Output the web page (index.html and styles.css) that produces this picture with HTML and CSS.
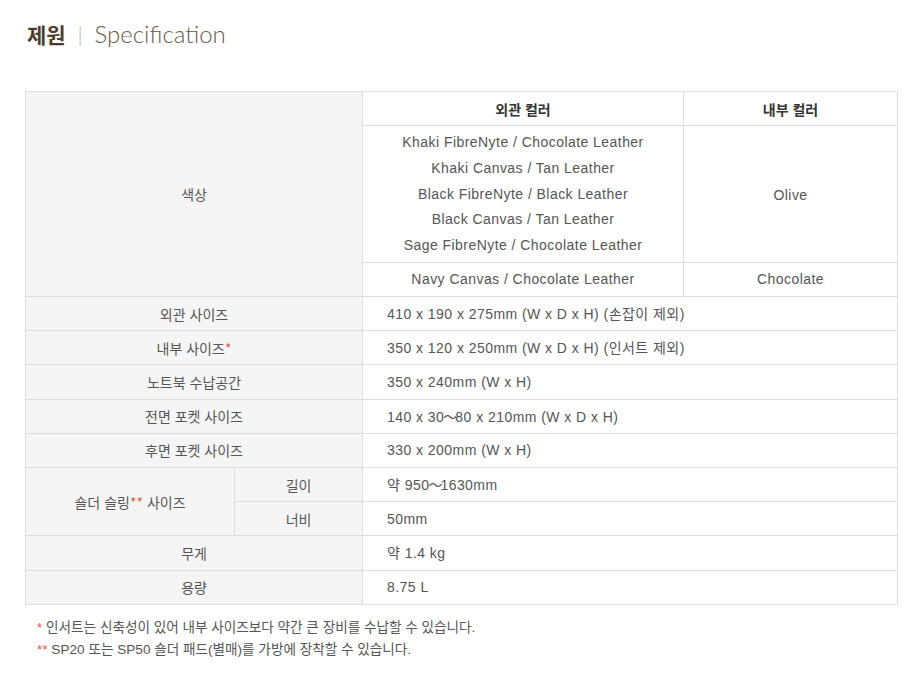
FILE: index.html
```html
<!DOCTYPE html>
<html lang="ko">
<head>
<meta charset="utf-8">
<link rel="stylesheet" href="styles.css">
</head>
<body>
<div class="page">
  <h1 class="title"><span class="ko">제원</span><span class="sep">|</span><span class="en">Specification</span></h1>
  <table class="spec">
    <colgroup>
      <col class="c1"><col class="c2"><col class="c3"><col class="c4">
    </colgroup>
    <tr class="r">
      <th class="lab" colspan="2" rowspan="3">색상</th>
      <th class="head">외관 컬러</th>
      <th class="head">내부 컬러</th>
    </tr>
    <tr>
      <td class="multi">Khaki FibreNyte / Chocolate Leather<br>Khaki Canvas / Tan Leather<br>Black FibreNyte / Black Leather<br>Black Canvas / Tan Leather<br>Sage FibreNyte / Chocolate Leather</td>
      <td class="center olive">Olive</td>
    </tr>
    <tr class="r">
      <td class="center">Navy Canvas / Chocolate Leather</td>
      <td class="center">Chocolate</td>
    </tr>
    <tr class="r">
      <th class="lab" colspan="2">외관 사이즈</th>
      <td class="val" colspan="2">410 x 190 x 275mm (W x D x H) (손잡이 제외)</td>
    </tr>
    <tr class="r">
      <th class="lab" colspan="2">내부 사이즈<span class="ast">*</span></th>
      <td class="val" colspan="2">350 x 120 x 250mm (W x D x H) (인서트 제외)</td>
    </tr>
    <tr class="r">
      <th class="lab" colspan="2">노트북 수납공간</th>
      <td class="val" colspan="2">350 x 240mm (W x H)</td>
    </tr>
    <tr class="r">
      <th class="lab" colspan="2">전면 포켓 사이즈</th>
      <td class="val" colspan="2">140 x 30<span class="tilde">～</span>80 x 210mm (W x D x H)</td>
    </tr>
    <tr class="r">
      <th class="lab" colspan="2">후면 포켓 사이즈</th>
      <td class="val" colspan="2">330 x 200mm (W x H)</td>
    </tr>
    <tr class="r">
      <th class="lab" rowspan="2">숄더 슬링<span class="ast">**</span> 사이즈</th>
      <th class="lab">길이</th>
      <td class="val" colspan="2">약 950<span class="tilde">～</span>1630mm</td>
    </tr>
    <tr class="r">
      <th class="lab">너비</th>
      <td class="val" colspan="2">50mm</td>
    </tr>
    <tr class="r">
      <th class="lab" colspan="2">무게</th>
      <td class="val" colspan="2">약 1.4 kg</td>
    </tr>
    <tr class="r">
      <th class="lab" colspan="2">용량</th>
      <td class="val" colspan="2">8.75 L</td>
    </tr>
  </table>
  <ul class="notes">
    <li><span class="ast">*</span> 인서트는 신축성이 있어 내부 사이즈보다 약간 큰 장비를 수납할 수 있습니다.</li>
    <li><span class="ast">**</span> SP20 또는 SP50 숄더 패드(별매)를 가방에 장착할 수 있습니다.</li>
  </ul>
</div>
</body>
</html>
```

FILE: styles.css
```css
html, body {
  margin: 0;
  padding: 0;
  background: #ffffff;
}
body {
  font-family: "Liberation Sans", "Noto Sans CJK KR", sans-serif;
  color: #555555;
}
.page {
  padding: 17px 24px 0 25px;
}
.title {
  margin: 0;
  height: 34px;
  display: flex;
  align-items: center;
  font-weight: normal;
  line-height: 1;
}
.title .ko {
  font-family: "Noto Sans CJK KR", sans-serif;
  font-weight: 700;
  font-size: 21px;
  color: #4e3d2c;
  margin-left: 2px;
}
.title .sep {
  font-family: "Noto Sans", sans-serif;
  font-weight: 300;
  font-size: 20px;
  color: #c8c0b8;
  margin: 0 9px 0 9px;
}
.title .en {
  font-family: "Lato", sans-serif;
  font-weight: 300;
  font-size: 24px;
  color: #6b5843;
}
.spec {
  margin-top: 40px;
  width: 873px;
  border-collapse: collapse;
  table-layout: fixed;
  font-size: 14px;
  line-height: 20px;
}
.c1 { width: 209px; }
.c2 { width: 128px; }
.c3 { width: 321px; }
.c4 { width: 214px; }
.spec th, .spec td {
  border: 1px solid #dddddd;
  padding: 0;
  font-weight: normal;
  color: #555555;
  text-align: center;
  vertical-align: middle;
}
.spec td {
  letter-spacing: 0.45px;
}
.spec th.lab {
  font-family: "Noto Sans CJK KR", sans-serif;
  background: #f5f5f5;
}
.spec tr.r > th, .spec tr.r > td {
  height: 33.22px;
}
.spec th.head {
  font-family: "Noto Sans CJK KR", sans-serif;
  font-weight: 700;
  color: #333333;
  background: #ffffff;
}
.spec td.multi {
  line-height: 25.7px;
  padding: 4px 0 3px;
}
.spec td.olive {
  padding-top: 2px;
}
.spec td.val {
  text-align: left;
  padding-left: 24px;
}
.tilde {
  font-family: "Noto Sans CJK KR", sans-serif;
  letter-spacing: -2px;
  margin-left: -1px;
}
.ast {
  color: #e25a48;
}
.notes {
  list-style: none;
  margin: 12px 0 0 12px;
  padding: 0;
  font-size: 13.6px;
  line-height: 22px;
  color: #555555;
}
```
